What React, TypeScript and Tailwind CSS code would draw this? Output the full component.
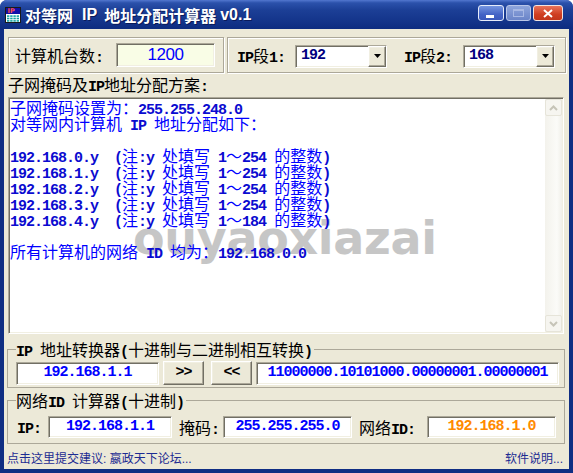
import React from "react";

const CJK_RE = /[\u2E80-\u9FFF\uF900-\uFAFF\uFE30-\uFE4F\uFF00-\uFFEF\u3000-\u303F]/;

function splitRuns(text: string) {
  const out: { cjk: boolean; s: string }[] = [];
  for (const ch of text) {
    const c = CJK_RE.test(ch);
    const last = out[out.length - 1];
    if (last && last.cjk === c) last.s += ch;
    else out.push({ cjk: c, s: ch });
  }
  return out;
}

const MONO =
  "[font-family:'Liberation_Mono','DejaVu_Sans_Mono',monospace] font-bold text-[15px] tracking-[-1px] whitespace-pre";
const CJKF =
  "[font-family:'Noto_Sans_CJK_SC','Noto_Sans_CJK_JP',sans-serif] font-normal text-[16px]";

function M({ text, a = MONO, c = CJKF }: { text: string; a?: string; c?: string }) {
  return (
    <>
      {splitRuns(text).map((r, i) => (
        <span key={i} className={r.cjk ? c : a}>
          {r.s}
        </span>
      ))}
    </>
  );
}

const SUNKEN =
  "border border-t-[#aca899] border-l-[#aca899] border-r-white border-b-white shadow-[inset_1px_1px_0_#716f64,inset_-1px_-1px_0_#f1efe2]";
const RAISED =
  "border border-t-white border-l-white border-r-[#716f64] border-b-[#716f64] shadow-[inset_-1px_-1px_0_#aca899,inset_1px_1px_0_#f1efe2] bg-[#ece9d8]";
const ETCHED = "border border-[#aca899] shadow-[inset_1px_1px_0_#ffffff,1px_1px_0_#ffffff]";

function AppIcon() {
  return (
    <svg width="16" height="16" viewBox="0 0 16 16" className="shrink-0">
      <rect x="0.5" y="0.5" width="15" height="15" fill="#ffffff" stroke="#1a1a1a" />
      <rect x="1" y="1" width="14" height="6" fill="#1010a8" />
      <text x="2.5" y="6.3" fontSize="6.5" fontWeight="bold" fill="#ff5050" fontFamily="'DejaVu Sans', sans-serif">
        IP
      </text>
      {[0, 1, 2].map((r) =>
        [0, 1, 2, 3].map((c) => (
          <rect key={`${r}-${c}`} x={2 + c * 3.2} y={8.3 + r * 2.4} width="2.4" height="1.6" fill="#13a3a3" />
        ))
      )}
    </svg>
  );
}

function Combo({ value }: { value: string }) {
  return (
    <div className={SUNKEN + " w-[92px] h-[23px] bg-white flex"}>
      <div className="flex-1 flex items-center pl-[5px] text-[#000080] leading-[16px]">
        <span className={MONO}>{value}</span>
      </div>
      <div className={RAISED + " w-[18px] h-full flex items-center justify-center"}>
        <svg width="7" height="4" viewBox="0 0 7 4">
          <polygon points="0,0 7,0 3.5,4" fill="#000000" />
        </svg>
      </div>
    </div>
  );
}

function Field({ w, h, value, color = "text-[#0000ff]" }: { w: string; h: string; value: string; color?: string }) {
  return (
    <div className={SUNKEN + ` ${w} ${h} bg-white flex items-center justify-center leading-[16px] ${color}`}>
      <span className={MONO}>{value}</span>
    </div>
  );
}

function Chevron({ up }: { up: boolean }) {
  return (
    <svg width="9" height="6" viewBox="0 0 9 6">
      <polyline
        points={up ? "1,5 4.5,1.5 8,5" : "1,1 4.5,4.5 8,1"}
        fill="none"
        stroke="#c6c4b8"
        strokeWidth="2"
      />
    </svg>
  );
}

function Line({ text }: { text: string }) {
  return (
    <div className="h-[16px] leading-[16px] whitespace-pre">
      <M text={text} a={MONO + " text-[#0b0bd0]"} />
    </div>
  );
}

export default function App() {
  const rows = [0, 1, 2, 3, 4].map((n) => `192.168.${n}.y  (注:y 处填写 1～${n === 4 ? "184" : "254"} 的整数)`);
  const TCJK = "[font-family:'Noto_Sans_CJK_SC',sans-serif] font-bold text-[16px]";
  const TLAT = "[font-family:'Liberation_Sans',Arial,sans-serif] font-bold text-[16px]";
  const LINK_A = "[font-family:'Liberation_Sans',Arial,sans-serif] text-[12px] whitespace-pre";
  const LINK_C = "[font-family:'Noto_Sans_CJK_SC',sans-serif] text-[12px]";

  return (
    <div className="w-[573px] h-[473px] bg-white">
      <div className="w-[573px] h-[473px] bg-[#0f2e83] rounded-t-[7px] flex flex-col overflow-hidden">
        {/* Title bar */}
        <div className="h-[29px] shrink-0 flex items-center pl-[5px] pr-[10px] bg-[linear-gradient(180deg,#5277cf_0%,#2b51ab_10%,#1c3f96_35%,#14358b_70%,#0d2c80_100%)]">
          <AppIcon />
          <div className="ml-[4px] flex items-center text-white leading-[18px] [text-shadow:1px_1px_0_#0a1a5a] whitespace-pre">
            <span className={TCJK}>对等网</span>
            <span className={TLAT + " ml-[9px]"}>IP</span>
            <span className={TCJK + " ml-[7px]"}>地址分配计算器</span>
            <span className={TLAT + " ml-[4px]"}>v0.1</span>
          </div>
          <div className="ml-auto mb-[3px] flex items-center gap-[2px]">
            <div className="w-[26px] h-[16px] rounded-[3px] border border-[#e6ecfa] bg-[linear-gradient(180deg,#7595e0,#4464c6_60%,#3a58bb)] relative">
              <div className="absolute left-[7px] top-[9px] w-[8px] h-[3px] bg-white" />
            </div>
            <div className="w-[25px] h-[16px] rounded-[3px] border border-[#b9c6e8] bg-[linear-gradient(180deg,#8ea5dc,#6a84c8)] flex items-center justify-center">
              <div className="w-[11px] h-[8px] border border-[#a7b8e4] border-t-2" />
            </div>
            <div className="w-[30px] h-[16px] rounded-[3px] border border-[#f2e4e0] bg-[linear-gradient(180deg,#e8735a,#cf3e22_60%,#c2351c)] flex items-center justify-center">
              <svg width="10" height="9" viewBox="0 0 10 9">
                <path d="M1,1 L9,8 M9,1 L1,8" stroke="#ffffff" strokeWidth="2" />
              </svg>
            </div>
          </div>
        </div>

        {/* Client area */}
        <div className="mx-[4px] mb-[4px] flex-1 bg-[#ece9d8] flex flex-col text-black">
          {/* Row 1 */}
          <div className="flex mt-[8px] ml-[4px] gap-[3px] h-[36px]">
            <div className={ETCHED + " w-[216px] h-full flex items-center pl-[6px]"}>
              <span className="leading-[16px] h-[16px] whitespace-pre">
                <M text="计算机台数:" />
              </span>
              <div className={SUNKEN + " ml-[13px] w-[99px] h-[24px] bg-[#f9fde6] flex items-center justify-center"}>
                <span className="[font-family:'Liberation_Sans',Arial,sans-serif] text-[17px] leading-[20px] text-[#0000ff] tracking-[-0.5px]">
                  1200
                </span>
              </div>
            </div>
            <div className={ETCHED + " w-[339px] h-full flex items-center pl-[9px]"}>
              <span className="leading-[16px] h-[16px] whitespace-pre">
                <M text="IP段1:" />
              </span>
              <div className="ml-[10px] mt-[2px]">
                <Combo value="192" />
              </div>
              <span className="ml-[17px] leading-[16px] h-[16px] whitespace-pre">
                <M text="IP段2:" />
              </span>
              <div className="ml-[11px] mt-[2px]">
                <Combo value="168" />
              </div>
            </div>
          </div>

          {/* Label */}
          <div className="mt-[3px] ml-[4px] h-[16px] leading-[16px] whitespace-pre">
            <M text="子网掩码及IP地址分配方案:" />
          </div>

          {/* Text area */}
          <div className={SUNKEN + " mt-[5px] ml-[4px] w-[556px] h-[237px] bg-white flex p-[1px]"}>
            <div className="relative flex-1 overflow-hidden text-[#0000ff]">
              <div className="absolute left-[123px] top-[116px] [font-family:'DejaVu_Sans',sans-serif] font-bold text-[46px] leading-[46px] tracking-[-0.3px] text-[#c6c6c6] whitespace-pre">
                ouyaoxiazai
              </div>
              <div className="relative">
                <Line text="子网掩码设置为：255.255.248.0" />
                <Line text="对等网内计算机 IP 地址分配如下：" />
                <div className="h-[16px]" />
                {rows.map((r) => (
                  <Line key={r} text={r} />
                ))}
                <div className="h-[16px]" />
                <Line text="所有计算机的网络 ID 均为：192.168.0.0" />
              </div>
            </div>
            <div className="w-[17px] h-full flex flex-col bg-[linear-gradient(90deg,#f3f2ec,#fbfbf8_70%,#f1f0ea)]">
              <div className="h-[17px] rounded-[2px] border border-[#e6e4d9] bg-[#f6f5f0] flex items-center justify-center">
                <Chevron up />
              </div>
              <div className="flex-1" />
              <div className="h-[17px] rounded-[2px] border border-[#e6e4d9] bg-[#f6f5f0] flex items-center justify-center">
                <Chevron up={false} />
              </div>
            </div>
          </div>

          {/* IP converter */}
          <fieldset className={"mt-[7px] ml-[3px] w-[558px] border border-[#aca899] pl-[8px] pr-[5px] pb-[2px]"}>
            <legend className="h-[16px] leading-[16px] pr-[2px] whitespace-pre">
              <M text="IP 地址转换器(十进制与二进制相互转换)" />
            </legend>
            <div className="mt-[4px] h-[24px] flex items-center">
              <Field w="w-[143px]" h="h-[23px]" value="192.168.1.1" />
              <div className={RAISED + " ml-[4px] w-[41px] h-[24px] flex items-center justify-center leading-[16px]"}>
                <span className={MONO}>{">>"}</span>
              </div>
              <div className={RAISED + " ml-[7px] w-[41px] h-[24px] flex items-center justify-center leading-[16px]"}>
                <span className={MONO}>{"<<"}</span>
              </div>
              <div className="ml-[4px]">
                <Field w="w-[303px]" h="h-[23px]" value="11000000.10101000.00000001.00000001" />
              </div>
            </div>
          </fieldset>

          {/* Network ID calculator */}
          <fieldset className={"mt-[4px] ml-[3px] w-[558px] border border-[#aca899] pl-[9px] pr-[8px] pb-[5px]"}>
            <legend className="-ml-[1px] h-[16px] leading-[16px] pr-[2px] whitespace-pre">
              <M text="网络ID 计算器(十进制)" />
            </legend>
            <div className="mt-[8px] h-[22px] flex items-center">
              <span className="leading-[16px] h-[16px] whitespace-pre">
                <M text="IP:" />
              </span>
              <div className="ml-[7px]">
                <Field w="w-[124px]" h="h-[22px]" value="192.168.1.1" />
              </div>
              <span className="ml-[7px] leading-[16px] h-[16px] whitespace-pre">
                <M text="掩码:" />
              </span>
              <div className="ml-[4px]">
                <Field w="w-[129px]" h="h-[22px]" value="255.255.255.0" />
              </div>
              <span className="ml-[7px] leading-[16px] h-[16px] whitespace-pre">
                <M text="网络ID:" />
              </span>
              <div className="ml-[12px]">
                <Field w="w-[129px]" h="h-[22px]" value="192.168.1.0" color="text-[#ff8a00]" />
              </div>
            </div>
          </fieldset>

          {/* Links */}
          <div className="mt-[6px] h-[15px] leading-[15px] flex justify-between pl-[3px] pr-[6px] text-[#1d2c92]">
            <span className="whitespace-pre">
              <M text="点击这里提交建议: 嬴政天下论坛..." a={LINK_A} c={LINK_C} />
            </span>
            <span className="whitespace-pre">
              <M text="软件说明..." a={LINK_A} c={LINK_C} />
            </span>
          </div>
        </div>
      </div>
    </div>
  );
}
